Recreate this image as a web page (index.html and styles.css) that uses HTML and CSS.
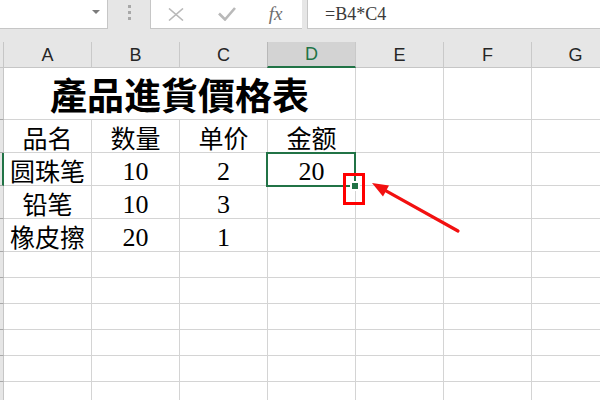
FILE: index.html
```html
<!DOCTYPE html>
<html lang="zh">
<head>
<meta charset="utf-8">
<title>產品進貨價格表</title>
<link rel="stylesheet" href="styles.css">
</head>
<body>
<div class="app">
  <div class="fbar">
    <div class="namebox"><span class="caret"></span></div>
    <div class="grip"><i></i><i></i><i></i></div>
    <div class="btns">
      <span class="slot s1">
        <svg class="ico" width="16" height="13" viewBox="0 0 16 13"><path d="M1 0.5 L15 12.5 M15 0.5 L1 12.5" stroke="#b9b9b9" stroke-width="1.6" fill="none"/></svg>
      </span>
      <span class="slot s2">
        <svg class="ico" width="18" height="14" viewBox="0 0 18 14"><path d="M1 6.5 L7 12.5 L17 1" stroke="#b9b9b9" stroke-width="2.6" fill="none"/></svg>
      </span>
      <span class="slot s3"><span class="fx">fx</span></span>
    </div>
    <div class="gap"></div>
    <div class="formula">=B4*C4</div>
  </div>
  <div class="band"></div>
  <div class="sheet">
    <div class="corner"></div>
    <div class="ch">A</div><div class="ch">B</div><div class="ch">C</div><div class="ch sel">D</div><div class="ch">E</div><div class="ch">F</div><div class="ch">G</div>

    <div class="rh"></div>
    <div class="c title">產品進貨價格表</div><div class="c"></div><div class="c"></div><div class="c"></div>

    <div class="rh"></div>
    <div class="c">品名</div><div class="c">数量</div><div class="c">单价</div><div class="c">金额</div><div class="c"></div><div class="c"></div><div class="c"></div>

    <div class="rh sel"></div>
    <div class="c">圆珠笔</div><div class="c num">10</div><div class="c num">2</div>
    <div class="c num active">20<span class="selbox"></span><span class="handle"></span></div>
    <div class="c"></div><div class="c"></div><div class="c"></div>

    <div class="rh"></div>
    <div class="c">铅笔</div><div class="c num">10</div><div class="c num">3</div><div class="c"></div><div class="c"></div><div class="c"></div><div class="c"></div>

    <div class="rh"></div>
    <div class="c">橡皮擦</div><div class="c num">20</div><div class="c num">1</div><div class="c"></div><div class="c"></div><div class="c"></div><div class="c"></div>

    <div class="rh"></div><div class="c"></div><div class="c"></div><div class="c"></div><div class="c"></div><div class="c"></div><div class="c"></div><div class="c"></div>
    <div class="rh"></div><div class="c"></div><div class="c"></div><div class="c"></div><div class="c"></div><div class="c"></div><div class="c"></div><div class="c"></div>
    <div class="rh"></div><div class="c"></div><div class="c"></div><div class="c"></div><div class="c"></div><div class="c"></div><div class="c"></div><div class="c"></div>
    <div class="rh"></div><div class="c"></div><div class="c"></div><div class="c"></div><div class="c"></div><div class="c"></div><div class="c"></div><div class="c"></div>
    <div class="rh"></div><div class="c"></div><div class="c"></div><div class="c"></div><div class="c"></div><div class="c"></div><div class="c"></div><div class="c"></div>
    <div class="rh"></div><div class="c"></div><div class="c"></div><div class="c"></div><div class="c"></div><div class="c"></div><div class="c"></div><div class="c"></div>
  </div>
  <svg class="annot" width="600" height="400" viewBox="0 0 600 400">
    <rect x="344.5" y="174.5" width="19" height="29" fill="none" stroke="#ff0000" stroke-width="3"/>
    <line x1="458" y1="231" x2="382" y2="188.6" stroke="#f21010" stroke-width="3.2" stroke-linecap="round"/>
    <polygon points="372,183 389,185.5 383,196.5" fill="#f21010"/>
  </svg>
</div>
</body>
</html>
```

FILE: styles.css
```css
* { box-sizing: border-box; margin: 0; padding: 0; }
html, body { width: 600px; height: 400px; overflow: hidden; background: #ffffff; }
body { font-family: "Liberation Sans", Arial, sans-serif; }

.app { position: relative; width: 600px; height: 400px; overflow: hidden; }

/* formula bar */
.fbar { display: flex; height: 29px; background: #e6e6e6; }
.namebox {
  width: 108px; height: 29px; background: #ffffff;
  border-bottom: 1px solid #c6c6c6; border-right: 1px solid #c6c6c6;
  display: flex; justify-content: flex-end; align-items: flex-start;
  padding-right: 7px; padding-top: 10px;
}
.caret {
  width: 0; height: 0;
  border-left: 4px solid transparent; border-right: 4px solid transparent;
  border-top: 4px solid #7b7b7b;
}
.grip {
  width: 42px; display: flex; flex-direction: column; align-items: center;
  padding-top: 5px; gap: 3px;
}
.grip i { display: block; width: 3px; height: 3px; background: #a8a8a8; }
.btns {
  width: 152px; height: 29px; background: #ffffff;
  border-left: 1px solid #c6c6c6; border-bottom: 1px solid #c6c6c6;
  display: flex; align-items: center;
}
.slot { display: flex; justify-content: center; align-items: center; height: 28px; }
.s1 { width: 50px; }
.s2 { width: 51px; }
.s3 { width: 50px; padding-right: 3px; }
.ico { display: block; }
.fx {
  font-family: "Liberation Serif", serif; font-style: italic;
  font-size: 19px; color: #6e6e6e; line-height: 28px;
}
.gap { width: 5px; }
.formula {
  flex: 1; height: 29px; background: #ffffff;
  border-left: 1px solid #c6c6c6; border-bottom: 1px solid #c6c6c6;
  padding-left: 17px;
  font-family: "Liberation Serif", serif; font-size: 18px; line-height: 28px;
  color: #3a3a3a; white-space: nowrap;
}
.band { height: 13px; background: #e6e6e6; }

/* sheet grid */
.sheet {
  display: grid;
  grid-template-columns: 4px repeat(7, 88px);
  grid-template-rows: 26px 52px repeat(4, 33px) repeat(6, 26px);
}
.corner {
  background: #e6e6e6;
  border-right: 1px solid #c6c6c6; border-bottom: 1px solid #c6c6c6;
}
.ch {
  background: #e6e6e6;
  border-right: 1px solid #c9c9c9; border-bottom: 1px solid #c6c6c6;
  display: flex; justify-content: center; align-items: center;
  font-family: "Liberation Sans", Arial, sans-serif; font-size: 18px; color: #262626;
  padding-top: 1px;
}
.ch.sel {
  background: #d3d3d3; color: #217346;
  border-left: 1px solid #b8b8b8; margin-left: -1px;
  border-bottom: 2px solid #217346;
}
.rh {
  background: #e6e6e6;
  border-right: 1px solid #c6c6c6; border-bottom: 1px solid #a9a9a9;
}
.rh.sel { border-right: 2px solid #217346; }

.c {
  border-right: 1px solid #d4d4d4; border-bottom: 1px solid #d4d4d4;
  display: flex; justify-content: center; align-items: flex-end;
  font-family: "Liberation Serif", "Noto Sans CJK SC", serif;
  font-size: 25px; line-height: 1; color: #000000;
  white-space: nowrap;
}
.c.num { font-size: 26px; }
.c.title {
  grid-column: span 4;
  font-family: "Noto Sans CJK TC", "Noto Sans CJK SC", sans-serif;
  font-weight: 700; font-size: 37px; padding-bottom: 6px;
}
.active { position: relative; }
.selbox {
  position: absolute; left: -2px; top: -1px; right: -1px; bottom: -2px;
  border: 2px solid #217346;
}
.handle {
  position: absolute; left: 82px; top: 28px; width: 10px; height: 10px;
  background: #217346; border: 2px solid #ffffff;
}

/* annotation overlay */
.annot { position: absolute; left: 0; top: 0; pointer-events: none; }
```
